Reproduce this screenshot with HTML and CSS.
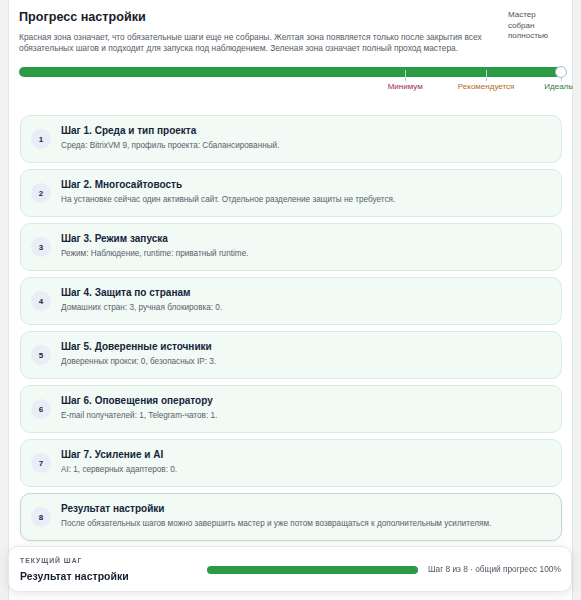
FILE: index.html
```html
<!DOCTYPE html>
<html lang="ru">
<head>
<meta charset="utf-8">
<link rel="stylesheet" href="styles.css">
</head>
<body>
<div class="panel">
  <div class="head">
    <div class="head-main">
      <h1 class="title">Прогресс настройки</h1>
      <p class="desc">Красная зона означает, что обязательные шаги еще не собраны. Желтая зона появляется только после закрытия всех обязательных шагов и подходит для запуска под наблюдением. Зеленая зона означает полный проход мастера.</p>
    </div>
    <div class="head-side">Мастер собран полностью</div>
  </div>

  <div class="scale">
    <div class="track"><div class="fill"></div></div>
    <span class="tick" style="left: 70.6%"></span>
    <span class="tick" style="left: 85.4%"></span>
    <span class="tick" style="left: 99.1%"></span>
    <span class="knob"></span>
    <span class="mark mark-min" style="left: 70.6%">Минимум</span>
    <span class="mark mark-rec" style="left: 85.4%">Рекомендуется</span>
    <span class="mark mark-ideal">Идеалы</span>
  </div>

  <ol class="steps">
    <li class="step"><span class="num">1</span><div class="step-body"><div class="step-title">Шаг 1. Среда и тип проекта</div><div class="step-desc">Среда: BitrixVM 9, профиль проекта: Сбалансированный.</div></div></li>
    <li class="step"><span class="num">2</span><div class="step-body"><div class="step-title">Шаг 2. Многосайтовость</div><div class="step-desc">На установке сейчас один активный сайт. Отдельное разделение защиты не требуется.</div></div></li>
    <li class="step"><span class="num">3</span><div class="step-body"><div class="step-title">Шаг 3. Режим запуска</div><div class="step-desc">Режим: Наблюдение, runtime: приватный runtime.</div></div></li>
    <li class="step"><span class="num">4</span><div class="step-body"><div class="step-title">Шаг 4. Защита по странам</div><div class="step-desc">Домашних стран: 3, ручная блокировка: 0.</div></div></li>
    <li class="step"><span class="num">5</span><div class="step-body"><div class="step-title">Шаг 5. Доверенные источники</div><div class="step-desc">Доверенных прокси: 0, безопасных IP: 3.</div></div></li>
    <li class="step"><span class="num">6</span><div class="step-body"><div class="step-title">Шаг 6. Оповещения оператору</div><div class="step-desc">E-mail получателей: 1, Telegram-чатов: 1.</div></div></li>
    <li class="step"><span class="num">7</span><div class="step-body"><div class="step-title">Шаг 7. Усиление и AI</div><div class="step-desc">AI: 1, серверных адаптеров: 0.</div></div></li>
    <li class="step step-active"><span class="num">8</span><div class="step-body"><div class="step-title">Результат настройки</div><div class="step-desc">После обязательных шагов можно завершить мастер и уже потом возвращаться к дополнительным усилителям.</div></div></li>
  </ol>
</div>

<div class="footer">
  <div class="cur">
    <div class="cur-label">Текущий шаг</div>
    <div class="cur-title">Результат настройки</div>
  </div>
  <div class="foot-bar"><div class="foot-fill"></div></div>
  <div class="foot-text">Шаг 8 из 8 · общий прогресс 100%</div>
</div>
</body>
</html>
```

FILE: styles.css
```css
* { box-sizing: border-box; }
html, body { height: 100%; }
body {
  margin: 0 8px;
  background: #f0f1f3;
  font-family: "Liberation Sans", Arial, sans-serif;
  color: #1b2636;
  overflow: hidden;
}
.panel {
  background: #fff;
  border-left: 1px solid #e2e5e9;
  border-right: 1px solid #e2e5e9;
  padding: 8px 10px 80px 10px;
  min-height: 100%;
}
.head {
  display: flex;
  justify-content: space-between;
  gap: 20px;
}
.title {
  margin: 0;
  font-size: 12.6px;
  line-height: 18px;
  font-weight: 700;
  color: #16202c;
}
.desc {
  margin: 6px 0 0 0;
  font-size: 8.4px;
  line-height: 10.5px;
  color: #555c66;
}
.head-side {
  width: 52px;
  flex: none;
  margin-top: 2px;
  margin-right: 2px;
  font-size: 8px;
  line-height: 10.7px;
  color: #4a5260;
}
.scale {
  position: relative;
  margin-top: 14px;
  height: 30px;
  margin-right: -4px;
}
.track {
  height: 10px;
  border-radius: 5px;
  background: #2b9a44;
  overflow: hidden;
}
.fill { height: 100%; width: 100%; background: #2b9a44; }
.tick {
  position: absolute;
  top: 3px;
  width: 1px;
  height: 11px;
  background: #bfd0dc;
}
.knob {
  position: absolute;
  left: calc(99.1% - 6px);
  top: -1px;
  width: 12px;
  height: 12px;
  border-radius: 50%;
  background: #fff;
  border: 1px solid #aebbc7;
}
.mark {
  position: absolute;
  top: 15px;
  transform: translateX(-50%);
  font-size: 8px;
  line-height: 10px;
  white-space: nowrap;
}
.mark-min { color: #9b2b48; }
.mark-rec { color: #b36b1c; }
.mark-ideal { right: -8px; transform: none; color: #2e7a3c; }
.steps {
  list-style: none;
  margin: 18px 0 0 0;
  padding: 0 0 0 1px;
  display: flex;
  flex-direction: column;
  gap: 6px;
}
.step {
  height: 48px;
  display: flex;
  align-items: center;
  gap: 10px;
  padding: 0 10px;
  background: #f1faf4;
  border: 1px solid #d9ece1;
  border-radius: 10px;
}
.step-active {
  border: 1.5px solid #bfd9cc;
  box-shadow: 0 1px 3px rgba(0,0,0,0.06);
}
.num {
  width: 20px;
  height: 20px;
  flex: none;
  border-radius: 50%;
  background: #e7eef7;
  display: flex;
  align-items: center;
  justify-content: center;
  font-size: 8px;
  font-weight: 700;
  color: #1b2a3c;
}
.step-body { margin-top: -3px; }
.step-title {
  font-size: 10px;
  line-height: 14px;
  font-weight: 700;
  color: #15243a;
}
.step-desc {
  margin-top: 3px;
  font-size: 8.2px;
  line-height: 10px;
  color: #5a616b;
}
.footer {
  position: fixed;
  left: 8px;
  right: 9px;
  bottom: 8px;
  height: 46px;
  background: #fff;
  border: 1px solid #e6e8eb;
  border-radius: 10px;
  box-shadow: 0 2px 10px rgba(0,0,0,0.10);
  display: flex;
  align-items: center;
  padding: 0 10px 0 11px;
}
.cur { width: 187px; flex: none; }
.cur-label {
  font-size: 6.8px;
  line-height: 9px;
  font-weight: 700;
  letter-spacing: 1px;
  text-transform: uppercase;
  color: #5b626c;
}
.cur-title {
  margin-top: 5px;
  font-size: 10.5px;
  line-height: 13px;
  font-weight: 700;
  color: #15202e;
}
.foot-bar {
  width: 211px;
  height: 8px;
  border-radius: 4px;
  background: #e5e9ee;
  overflow: hidden;
  margin-top: 1px;
}
.foot-fill { width: 100%; height: 100%; background: #2b9a44; }
.foot-text {
  margin-left: 10px;
  font-size: 8.3px;
  color: #4f5661;
  white-space: nowrap;
}
```
